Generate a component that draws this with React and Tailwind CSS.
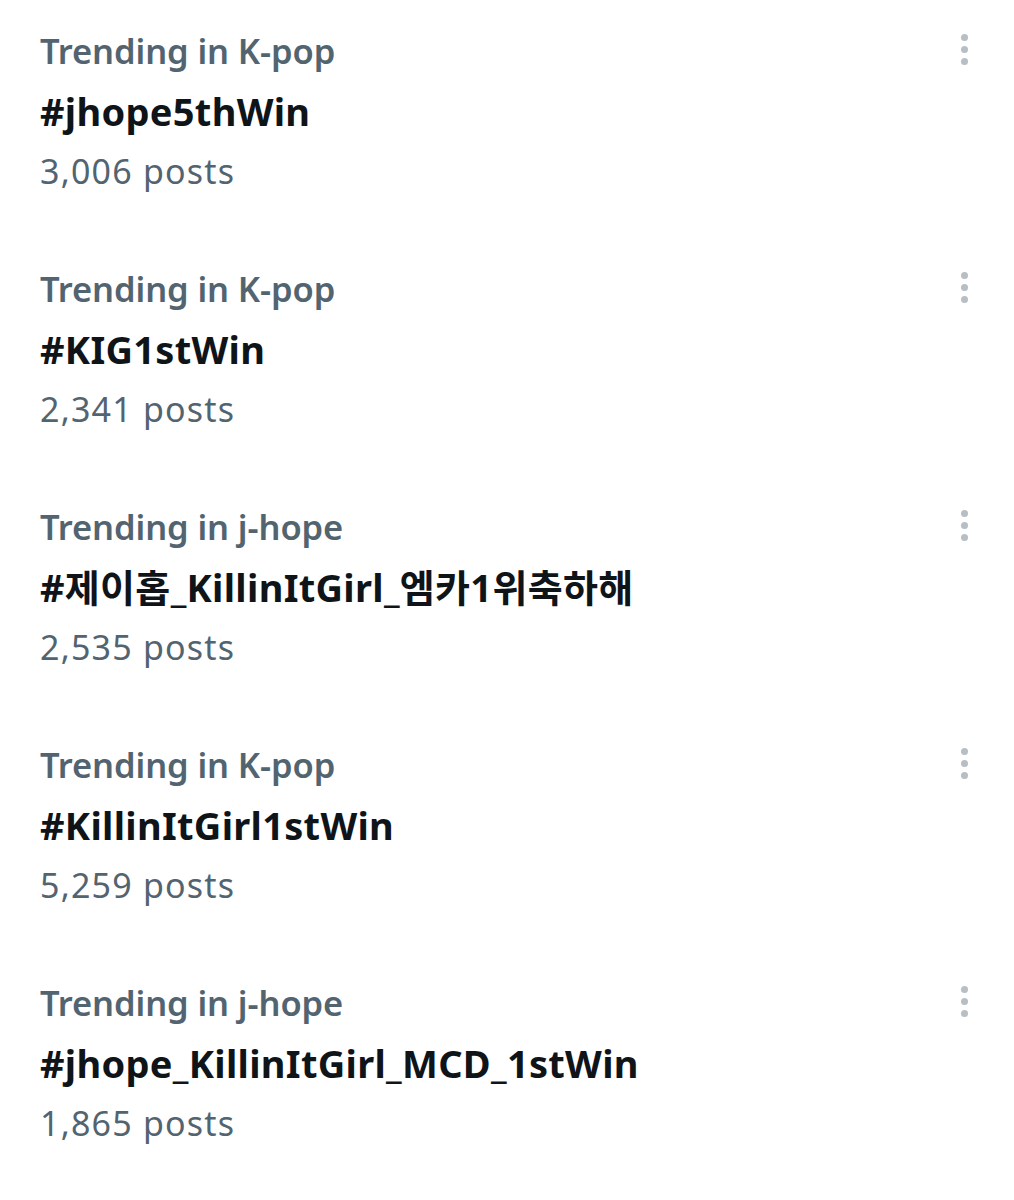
const trends = [
  { category: 'Trending in K-pop', tag: '#jhope5thWin', posts: '3,006 posts' },
  { category: 'Trending in K-pop', tag: '#KIG1stWin', posts: '2,341 posts' },
  { category: 'Trending in j-hope', tag: '#제이홉_KillinItGirl_엠카1위축하해', posts: '2,535 posts' },
  { category: 'Trending in K-pop', tag: '#KillinItGirl1stWin', posts: '5,259 posts' },
  { category: 'Trending in j-hope', tag: '#jhope_KillinItGirl_MCD_1stWin', posts: '1,865 posts' },
];

function MoreDots() {
  return (
    <div className="flex flex-col items-center gap-[5px] pt-[13px]">
      <span className="block h-[7px] w-[7px] rounded-full bg-[#b7bec4]" />
      <span className="block h-[7px] w-[7px] rounded-full bg-[#b7bec4]" />
      <span className="block h-[7px] w-[7px] rounded-full bg-[#b7bec4]" />
    </div>
  );
}

function TrendRow({ trend }) {
  return (
    <div className="flex items-start justify-between pl-[40px] pr-[46px] h-[238px]">
      <div className="flex flex-col">
        <p className="text-[34.5px] leading-[60px] font-semibold text-[#536471] tracking-[-0.1px]">{trend.category}</p>
        <p className="text-[38px] leading-[60px] font-bold text-[#0f1419] tracking-[0.3px]">{trend.tag}</p>
        <p className="text-[34px] leading-[60px] text-[#536471] tracking-[1.2px]">{trend.posts}</p>
      </div>
      <MoreDots />
    </div>
  );
}

export default function App() {
  return (
    <div
      className="w-[1014px] h-[1200px] bg-white pt-[21px] overflow-hidden"
      style={{ fontFamily: '"Noto Sans", "Noto Sans CJK KR", sans-serif' }}
    >
      {trends.map((t, i) => (
        <TrendRow key={i} trend={t} />
      ))}
    </div>
  );
}
